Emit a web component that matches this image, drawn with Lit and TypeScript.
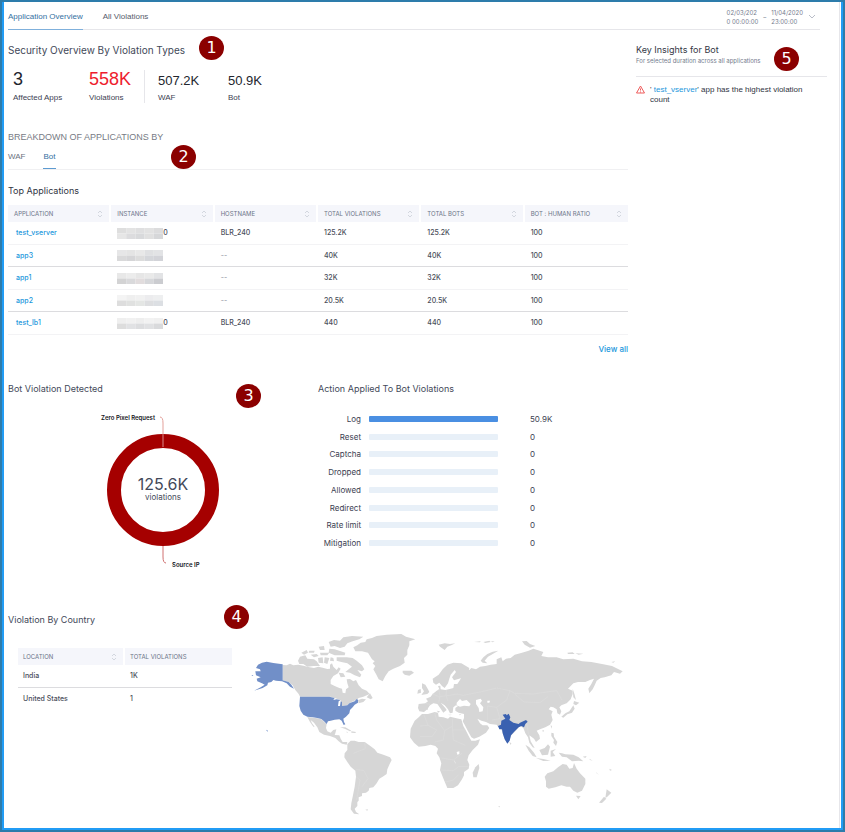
import { LitElement, html, css, svg } from "lit";
import { customElement } from "lit/decorators.js";

const sortIcon = html`<svg class="sort" viewBox="0 0 6 8" width="6" height="8" aria-hidden="true">
  <path d="M1 3 3 1 5 3M1 5 3 7 5 5" fill="none" stroke="#d3d7df" />
</svg>`;

interface AppRow {
  name: string;
  tail: string;
  host: string;
  violations: string;
  bots: string;
  ratio: string;
  shades: string[][];
}

const rows: AppRow[] = [
  { name: "test_vserver", tail: "0", host: "BLR_240", violations: "125.2K", bots: "125.2K", ratio: "100",
    shades: [["#dedede", "#e3e3e3", "#dfdfe0", "#e2e2e2", "#dcdcdd"], ["#e6e6e6", "#dcdcde", "#d8d9db", "#e0e0e0", "#d6d7d9"]] },
  { name: "app3", tail: "", host: "--", violations: "40K", bots: "40K", ratio: "100",
    shades: [["#e6e6e7", "#e4e4e4", "#e8e8e8", "#dfe0e2", "#e2e3e5"], ["#d9d9da", "#d5d5d7", "#dcdcdc", "#d4d6da", "#d2d3d8"]] },
  { name: "app1", tail: "", host: "--", violations: "32K", bots: "32K", ratio: "100",
    shades: [["#e8e8e8", "#ececec", "#e6e6e6", "#e9e9e9", "#e2e3e5"], ["#d3d3d4", "#d9d9db", "#e1dcdd", "#d6d7da", "#cbccd0"]] },
  { name: "app2", tail: "", host: "--", violations: "20.5K", bots: "20.5K", ratio: "100",
    shades: [["#f4f4f4", "#efefef", "#f1f1f1", "#ececee", "#eeeff0"], ["#dddddd", "#e0e1e0", "#e4e6e4", "#dddee0", "#dcdfe3"]] },
  { name: "test_lb1", tail: "0", host: "BLR_240", violations: "440", bots: "440", ratio: "100",
    shades: [["#efefef", "#f1f1f1", "#eeeeee", "#f2f2f2", "#f0f0f0"], ["#dddddd", "#e1e2e4", "#dcdddf", "#e0e1e3", "#d9dadc"]] },
];

const columns = ["APPLICATION", "INSTANCE", "HOSTNAME", "TOTAL VIOLATIONS", "TOTAL BOTS", "BOT : HUMAN RATIO"];

const actions: [string, string, number][] = [
  ["Log", "50.9K", 100],
  ["Reset", "0", 0],
  ["Captcha", "0", 0],
  ["Dropped", "0", 0],
  ["Allowed", "0", 0],
  ["Redirect", "0", 0],
  ["Rate limit", "0", 0],
  ["Mitigation", "0", 0],
];

/* Americas, Greenland and Iceland */
const west = [
  "M128 135 140 136 150 131 160 136 175 134 190 137 205 141 222 144 235 140 248 143 262 147 270 146 270 134 276 130 280 140 290 150 296 142 302 146 294 160 280 168 272 180 272 192 284 198 298 204 306 206 308 218 316 220 318 208 326 202 322 190 320 178 330 177 340 184 348 180 356 196 366 206 380 212 389 222 370 230 356 234 352 238 340 244 328 250 322 256 306 258 302 240 284 234 270 230 180 230 176 222 166 210 158 196 146 186 128 181Z",
  "M354 240 366 236 378 238 370 246 356 250ZM380 232 390 220 398 234 392 238Z",
  "M202 291 218 293 232 295 244 298 252 305 260 312 258 324 262 334 272 338 280 330 289 328 286 340 284 345 298 346 302 356 308 366 322 366 320 374 306 371 296 364 286 354 270 348 252 344 238 336 232 322 222 308 212 300 216 310 224 320 220 320 210 306Z",
  "M300 322 316 322 334 332 330 334 314 326ZM334 334 348 336 346 339 334 338ZM318 335 324 336 322 338Z",
  "M322 372 332 362 344 362 356 366 374 366 388 376 404 388 412 398 430 404 450 412 455 420 448 434 442 448 440 462 428 470 418 476 410 490 400 502 388 504 386 512 378 518 366 520 366 528 356 532 356 542 352 546 352 558 344 566 348 576 358 583 342 581 332 568 334 550 338 530 344 500 348 470 346 452 332 440 322 426 313 412 314 400 322 390Z",
  "M376 569 384 568 382 572Z",
  "M340 82 352 76 362 68 376 66 380 58 396 54 410 48 440 44 484 42 498 50 526 58 508 64 508 76 502 90 502 104 492 114 494 128 480 138 460 146 446 154 436 168 428 184 416 178 408 162 400 148 406 138 398 130 404 124 396 118 390 108 384 98 366 94 346 94Z",
  "M488 152 500 152 514 152 522 158 508 167 494 164 488 158Z",
  "M266 66 282 60 300 62 310 52 336 48 370 50 358 58 338 64 322 70 314 80 300 84 284 78 272 80Z",
  "M174 122 180 110 196 106 202 116 222 118 230 124 240 138 220 138 202 140 190 132 178 132Z",
  "M184 98 200 90 204 98 192 104ZM208 92 224 92 222 98 206 98ZM236 80 252 78 254 90 240 90ZM212 104 230 102 236 108 222 112ZM240 98 268 98 262 106 242 106ZM268 86 284 88 316 98 314 106 284 106 266 98ZM234 114 248 112 250 130 236 128ZM254 112 268 114 262 132 252 128ZM272 112 280 114 282 124 270 122Z",
  "M290 112 304 112 320 112 338 114 350 122 366 136 373 148 366 154 352 150 364 164 360 172 344 166 330 158 316 156 328 146 336 140 322 130 304 126 290 122Z",
  "M296 158 310 160 316 170 302 172Z",
];

const usa = [
  "M180 230 268 230 284 234 280 240 290 238 302 240 296 244 294 258 300 258 302 244 306 246 306 258 322 256 328 250 344 244 350 237 354 239 354 248 344 254 338 262 330 270 328 280 318 290 310 296 312 306 316 313 311 315 305 302 298 298 284 299 272 302 264 304 260 312 252 304 244 297 232 294 218 292 202 290 190 284 182 272 178 258Z",
  "M54 134 66 128 80 125 100 129 128 133 128 181 146 186 154 194 162 206 150 200 140 190 126 184 108 182 100 180 94 186 84 188 82 196 68 204 42 212 62 202 74 194 66 190 52 184 50 176 62 172 48 166 46 154 62 154 60 148 48 144Z",
  "M34 166 40 165 38 168ZM78 329 84 332 82 335Z",
];

/* Europe, Africa, Asia and Oceania */
const east = [
  "M56 252 76 250 84 244 78 236 92 230 98 222 110 212 118 208 114 198 121 197 122 208 136 210 152 206 160 204 162 192 172 192 180 180 190 160 190 150 208 150 214 144 228 148 240 140 256 138 272 134 290 132 290 118 304 112 308 124 318 116 332 114 344 104 366 98 386 92 400 86 412 90 430 96 424 108 444 112 470 112 490 118 520 116 546 124 574 126 606 132 636 138 668 154 660 161 642 156 634 166 614 172 602 174 590 182 584 196 578 208 568 220 565 206 574 192 582 176 570 180 556 186 534 186 520 190 504 206 518 212 518 222 512 238 500 250 484 256 478 262 484 274 480 284 472 280 470 268 460 262 452 260 446 268 458 274 454 284 458 300 450 314 436 322 420 328 410 332 418 346 420 356 408 366 402 356 394 350 388 346 392 364 404 384 398 382 388 368 384 352 376 340 370 324 360 318 346 334 334 346 328 360 322 368 314 358 308 340 304 328 294 320 290 314 270 312 258 306 244 302 232 296 240 310 248 316 262 316 268 324 258 338 238 350 222 356 214 352 204 334 194 314 188 304 192 294 192 282 176 278 166 272 166 264 174 258 168 256 160 262 158 278 150 280 144 268 134 256 122 248 136 264 140 270 130 278 122 266 112 252 100 250 90 256 82 268 72 276 58 274 54 264Z",
  "M98 176 116 164 128 148 142 134 160 128 184 130 208 144 206 152 192 154 192 172 162 181 156 172 168 156 164 150 152 164 148 176 144 190 134 204 126 198 118 188 108 194 100 188Z",
  "M66 190 76 194 84 208 88 216 82 222 64 225 72 214 66 204ZM54 210 62 207 63 218 52 221Z",
  "M66 282 84 282 104 276 114 278 116 290 130 292 144 296 150 290 176 296 184 298 190 318 200 336 206 348 214 362 226 362 240 358 234 374 218 390 206 406 202 420 208 434 206 446 192 456 192 466 186 478 174 496 160 504 142 504 136 490 128 470 120 450 124 430 118 412 110 400 114 386 106 378 92 374 76 378 56 380 42 368 30 352 32 326 44 302 56 292Z",
  "M236 432 238 444 230 472 220 472 218 458 226 442Z",
  "M434 470 442 460 460 454 474 442 488 432 500 434 508 446 518 444 522 429 530 446 540 460 556 476 556 492 546 512 532 518 520 512 510 500 500 500 484 496 466 502 446 506 438 500 438 484Z",
  "M528 527 542 528 535 538ZM620 508 634 518 622 530 616 534ZM612 530 619 536 606 549 597 548Z",
  "M522 243 538 248 528 256 520 252ZM520 256 524 266 516 278 502 283 490 293 484 290 496 280 508 274ZM518 206 524 224 528 240 520 232Z",
  "M376 374 388 382 402 398 410 412 398 408 386 392ZM408 414 430 417 452 422 430 423ZM418 390 434 384 444 373 450 380 444 404 426 406ZM452 392 468 387 458 396 466 408 452 410ZM476 398 486 400 496 403 520 404 536 412 550 424 536 422 516 424 500 412 486 410Z",
  "M454 338 461 340 462 350 472 366 468 378 460 368 462 360 454 348ZM426 332 432 330 430 336ZM452 316 456 318 454 326ZM328 366 334 370 332 375ZM548 410 560 408 556 414ZM568 416 578 422 570 420ZM588 456 596 464 590 460ZM628 446 636 450 630 452Z",
  "M242 122 250 112 262 102 278 95 295 92 282 100 264 110 254 122 262 130 248 128Z",
  "M116 74 134 70 150 72 166 70 154 76 142 80 134 90 120 80ZM366 64 380 63 390 72 406 78 390 83 374 74ZM502 98 518 97 524 102 504 102ZM526 100 550 101 536 104ZM634 126 646 124 640 128ZM222 66 242 64 240 67ZM250 66 268 62 272 66 256 69ZM272 64 284 64 278 67Z",
  "M294 560 300 558 299 562ZM82 262 84 270 80 268ZM110 272 120 274 116 278ZM144 284 156 284 150 286ZM176 284 184 282 180 286Z",
];

const seas = [
  "M170 248 180 237 186 243 200 240 212 252 208 259 192 257 180 260 170 256Z",
  "M228 240 242 236 246 242 240 250 250 262 248 274 238 276 236 264 228 252Z",
  "M170 396 178 394 178 402 172 404ZM262 242 270 242 268 248 262 248ZM164 420 167 432 164 426Z",
];

const borders = [
  "M72 284 84 316 60 318M104 278 110 300 134 332 158 318M158 296 158 330 196 330M134 332 130 360 104 366M158 330 160 360 196 376M84 316 110 330 96 350 60 350M120 450 160 452M124 414 160 420 186 400M160 452 176 440 206 440M136 486 160 480 176 464",
  "M250 214 290 204 330 212 344 220 400 222 440 216 470 212 486 240M330 212 320 240 290 262 262 258M344 222 372 246 420 248 444 230M262 258 262 300M290 262 300 296 276 300M346 304 364 302M380 310 386 344",
  "M98 222 116 230 150 226 170 222 190 226 220 220 250 214M116 208 120 228 116 248M140 210 138 226 144 244M76 250 92 254",
];

const india = "M294 318 303 314 304 302 316 296 308 284 318 282 320 286 326 281 331 292 328 300 340 308 356 312 360 308 378 300 383 305 376 312 372 322 364 318 356 322 344 334 333 346 329 362 322 371 314 358 308 340 306 328 298 328Z";

@customElement("world-map")
export class WorldMap extends LitElement {
  static styles = css`
    :host { display: block; }
    .map { display: block; width: 100%; height: auto; }
    .land { fill: #d6d6d6; }
    .sea { fill: #fff; }
    .line { fill: none; stroke: #dcdcdc; stroke-width: 2; }
    .us { fill: #718fc8; }
    .in { fill: #3a61b0; }
  `;

  render() {
    return html`<svg class="map" viewBox="0 0 1200 600" role="img" aria-label="Violations by country">
      ${west.map((d) => svg`<path class="land" d=${d} />`)}
      <path class="line" d="M348 448 372 452 384 476 366 500M374 366 376 386 340 400M348 470 360 480 350 540" />
      ${usa.map((d) => svg`<path class="us" d=${d} />`)}
      <g transform="translate(480 0)">
        ${east.map((d) => svg`<path class="land" d=${d} />`)}
        ${seas.map((d) => svg`<path class="sea" d=${d} />`)}
        ${borders.map((d) => svg`<path class="line" d=${d} />`)}
        <path class="in" d=${india} />
      </g>
    </svg>`;
  }
}

@customElement("app-root")
export class AppRoot extends LitElement {
  static styles = css`
    :host { display: block; font-family: Inter, "Liberation Sans", sans-serif; font-size: 8px; line-height: 10px; color: #3c4152; }
    * { box-sizing: border-box; }
    h2, h3, p { margin: 0; font-weight: 400; }
    a { color: #1c97dc; text-decoration: none; }
    button { border: 0; padding: 0; background: none; font: inherit; color: inherit; text-align: left; }
    svg { display: block; }

    .frame { border: 2px solid #2d7cab; min-height: 100vh; display: flex; }
    .window { flex: 1; min-width: 0; border: solid #219cf5; border-width: 0 2px 2px; display: flex; background: #fff; }
    .content { flex: 1; min-width: 0; margin-right: 1px; border-right: 1px solid #e6e6ea; padding: 0 12px 8px 4px; }

    .top { display: flex; justify-content: space-between; height: 28px; margin-right: 7px; border-bottom: 1px solid #e6e6ea; }
    .tabs { display: flex; gap: 20px; font-family: "Liberation Sans", sans-serif; }
    .tab { color: #555b6b; height: 28px; padding-top: 2px; border-bottom: 1px solid transparent; }
    .tab.on { color: #33709f; border-color: #7fb0dc; }
    .dates { display: flex; gap: 5px; align-items: center; font-size: 6px; line-height: 9px; color: #747b8d; padding-top: 2px; }
    .dates .chev { margin-right: 4px; }

    .cols { display: grid; grid-template-columns: minmax(0, 1fr) 191px; gap: 8px; }
    .title { font-size: 10px; line-height: 16px; color: #434959; }
    section { position: relative; }

    .badge { position: absolute; display: flex; align-items: center; justify-content: center; width: 25px; height: 24px; border-radius: 50%; background: #8b0000; color: #fff; font: 16px/24px "DejaVu Sans", sans-serif; }
    .b1 { left: 191px; top: 6px; }
    .b2 { left: 163px; top: 14px; }
    .b3 { left: 228px; top: 3px; }
    .b4 { left: 216px; top: -7px; }
    .b5 { left: 138px; top: 17px; }

    .overview { padding-top: 12px; }
    .stats { display: flex; align-items: flex-end; margin-top: 11px; padding-left: 5px; }
    .stat { display: flex; flex-direction: column; gap: 4px; font-family: "Liberation Sans", sans-serif; }
    .stat b { font-weight: 400; font-size: 18px; line-height: 20px; color: #23262e; }
    .stat.small b { font-size: 13px; line-height: 16px; }
    .stat.red b { color: #ee1c2e; }
    .w76 { width: 76px; }
    .w56 { width: 55px; }
    .w70 { width: 70px; }
    .rule { width: 1px; height: 33px; background: #e6e6ea; margin-right: 13px; }

    .breakdown { margin-top: 28px; }
    .caps { font-family: "Liberation Sans", sans-serif; font-size: 9px; line-height: 12px; color: #777b85; }
    .subtabs { display: flex; gap: 18px; margin-top: 9px; border-bottom: 1px solid #f0f0f2; font-family: "Liberation Sans", sans-serif; }
    .subtab { height: 17px; padding-bottom: 7px; color: #6b7180; border-bottom: 1px solid transparent; }
    .subtab.on { color: #33709f; border-color: #5d9bd1; }

    .apps { margin-top: 13px; }
    .apps .title { font-size: 9px; color: #2f3442; }
    table { width: 100%; table-layout: fixed; border-collapse: separate; border-spacing: 0; margin-top: 6px; }
    th { height: 17px; padding: 0 0 0 6px; background: #f5f6fb; background-clip: padding-box; border-right: 2px solid #fff; font-size: 6px; line-height: 8px; font-weight: 400; text-align: left; color: #6b7488; }
    th:last-child { border-right: 0; }
    .th { display: flex; justify-content: space-between; align-items: center; padding-right: 6px; }
    td { height: 23px; padding: 0 0 0 6px; font-size: 7px; font-weight: 500; border-bottom: 1px solid #f3f3f5; vertical-align: middle; color: #4a4e5a; }
    tr:nth-child(even) td { height: 22px; border-color: #dcdcdf; }
    td.name { padding-left: 8px; }
    td.dim { color: #9a9eaa; }
    .inst { display: flex; align-items: center; }
    .more { display: flex; justify-content: flex-end; margin-top: 9px; font-weight: 500; }

    .charts { display: grid; grid-template-columns: 310px 1fr; margin-top: 27px; }
    .charts .title, .country .title { font-size: 9px; }
    .donut { margin: 12px 0 0 87px; }
    .donut .big { font-size: 16px; fill: #434959; }
    .donut .mid { font-size: 8px; fill: #434959; }
    .donut .lab { font-size: 6px; font-weight: 600; fill: #15171c; }
    .bars { margin: 13px 0 0; display: grid; grid-auto-rows: 1fr; height: 142px; }
    .bar { display: grid; grid-template-columns: 43px 129px 60px; column-gap: 8px; align-items: center; }
    .bar label { text-align: right; }
    .track { height: 6px; background: #e8f0f8; border-radius: 1px; }
    .fill { height: 6px; background: #4a8fe2; border-radius: 1px; }
    .bar output { padding-left: 24px; }

    .country { margin-top: 39px; display: grid; grid-template-columns: 224px 400px; column-gap: 8px; }
    .country table { margin: 20px 0 0 10px; width: 214px; }
    .country th, .country td { padding-left: 5px; }
    .country tr:nth-child(odd) td { border-color: #dcdcdf; }
    .country tr:last-child td { border-color: transparent; }
    .country world-map { margin-top: 8px; }

    .side { padding-top: 13px; }
    .side p { font-size: 6px; line-height: 8px; color: #747b8d; }
    .side header { padding-bottom: 11px; border-bottom: 1px solid #e6e6ea; }
    .side header .title { font-size: 9px; line-height: 14px; color: #343846; }
    .alert { display: flex; gap: 5px; margin-top: 8px; color: #2f3442; font-family: "Liberation Sans", sans-serif; }
    .alert svg { flex: none; }
    .alert span { max-width: 164px; }
  `;

  private mosaic(shades: string[][]) {
    return html`<svg width="46" height="11" viewBox="0 0 45 10" preserveAspectRatio="none" aria-label="Hidden address">
      ${shades.map((line, y) => line.map((c, x) => svg`<rect x=${x * 9} y=${y * 5} width="9" height="5" fill=${c} />`))}
    </svg>`;
  }

  render() {
    return html`<div class="frame"><div class="window"><div class="content">
      <header class="top">
        <nav class="tabs">
          <button class="tab on">Application Overview</button>
          <button class="tab">All Violations</button>
        </nav>
        <button class="dates">
          <span>02/03/202<br />0 00:00:00</span><span>–</span><span>11/04/2020<br />23:00:00</span>
          <svg class="chev" width="8" height="6" viewBox="0 0 8 6"><path d="M1 1 4 4 7 1" fill="none" stroke="#b9bdc8" /></svg>
        </button>
      </header>
      <div class="cols">
        <main>
          <section class="overview">
            <h2 class="title">Security Overview By Violation Types</h2>
            <span class="badge b1">1</span>
            <div class="stats">
              <div class="stat w76"><b>3</b>Affected Apps</div>
              <div class="stat red w56"><b>558K</b>Violations</div>
              <div class="rule"></div>
              <div class="stat small w70"><b>507.2K</b>WAF</div>
              <div class="stat small"><b>50.9K</b>Bot</div>
            </div>
          </section>
          <section class="breakdown">
            <h2 class="caps">BREAKDOWN OF APPLICATIONS BY</h2>
            <nav class="subtabs">
              <button class="subtab">WAF</button>
              <button class="subtab on">Bot</button>
            </nav>
            <span class="badge b2">2</span>
          </section>
          <section class="apps">
            <h3 class="title">Top Applications</h3>
            <table>
              <thead><tr>${columns.map((c) => html`<th scope="col"><span class="th">${c}${sortIcon}</span></th>`)}</tr></thead>
              <tbody>
                ${rows.map((r) => html`<tr>
                  <td class="name"><a href="#">${r.name}</a></td>
                  <td><span class="inst">${this.mosaic(r.shades)}${r.tail}</span></td>
                  <td class=${r.host === "--" ? "dim" : ""}>${r.host}</td>
                  <td>${r.violations}</td><td>${r.bots}</td><td>${r.ratio}</td>
                </tr>`)}
              </tbody>
            </table>
            <div class="more"><a href="#">View all</a></div>
          </section>
          <section class="charts">
            <div>
              <h3 class="title">Bot Violation Detected</h3>
              <svg class="donut" width="140" height="164" viewBox="0 0 140 164">
                <circle cx="68" cy="81" r="49" fill="none" stroke="#a50000" stroke-width="14" />
                <path d="M68 25V38" stroke="#d98a8a" />
                <path d="M65 8Q68 8 68 14V25" fill="none" stroke="#e3a09a" />
                <path d="M68 137V148Q68 154 71 154" fill="none" stroke="#d07070" />
                <text class="lab" x="60" y="11" text-anchor="end">Zero Pixel Request</text>
                <text class="lab" x="77" y="158">Source IP</text>
                <text class="big" x="68" y="81" text-anchor="middle">125.6K</text>
                <text class="mid" x="68" y="91" text-anchor="middle">violations</text>
              </svg>
            </div>
            <div>
              <h3 class="title">Action Applied To Bot Violations</h3>
              <div class="bars">
                ${actions.map(([name, value, pct], i) => html`<div class="bar">
                  <label for="a${i}">${name}</label>
                  <div class="track"><div class="fill" style="width:${pct}%"></div></div>
                  <output id="a${i}">${value}</output>
                </div>`)}
              </div>
            </div>
            <span class="badge b3">3</span>
          </section>
          <section class="country">
            <div>
              <h3 class="title">Violation By Country</h3>
              <table>
                <thead><tr><th scope="col"><span class="th">LOCATION${sortIcon}</span></th><th scope="col">TOTAL VIOLATIONS</th></tr></thead>
                <tbody>
                  <tr><td>India</td><td>1K</td></tr>
                  <tr><td>United States</td><td>1</td></tr>
                </tbody>
              </table>
            </div>
            <world-map></world-map>
            <span class="badge b4">4</span>
          </section>
        </main>
        <section class="side">
          <header>
            <h2 class="title">Key Insights for Bot</h2>
            <p>For selected duration across all applications</p>
            <span class="badge b5">5</span>
          </header>
          <div class="alert">
            <svg width="9" height="9" viewBox="0 0 18 18"><path d="M9 2 17 16H1ZM9 7V11M9 13V15" fill="none" stroke="#ee5a5a" stroke-width="2" stroke-linejoin="round" /></svg>
            <span>' <a href="#">test_vserver</a>' app has the highest violation count</span>
          </div>
        </section>
      </div>
    </div></div></div>`;
  }
}
